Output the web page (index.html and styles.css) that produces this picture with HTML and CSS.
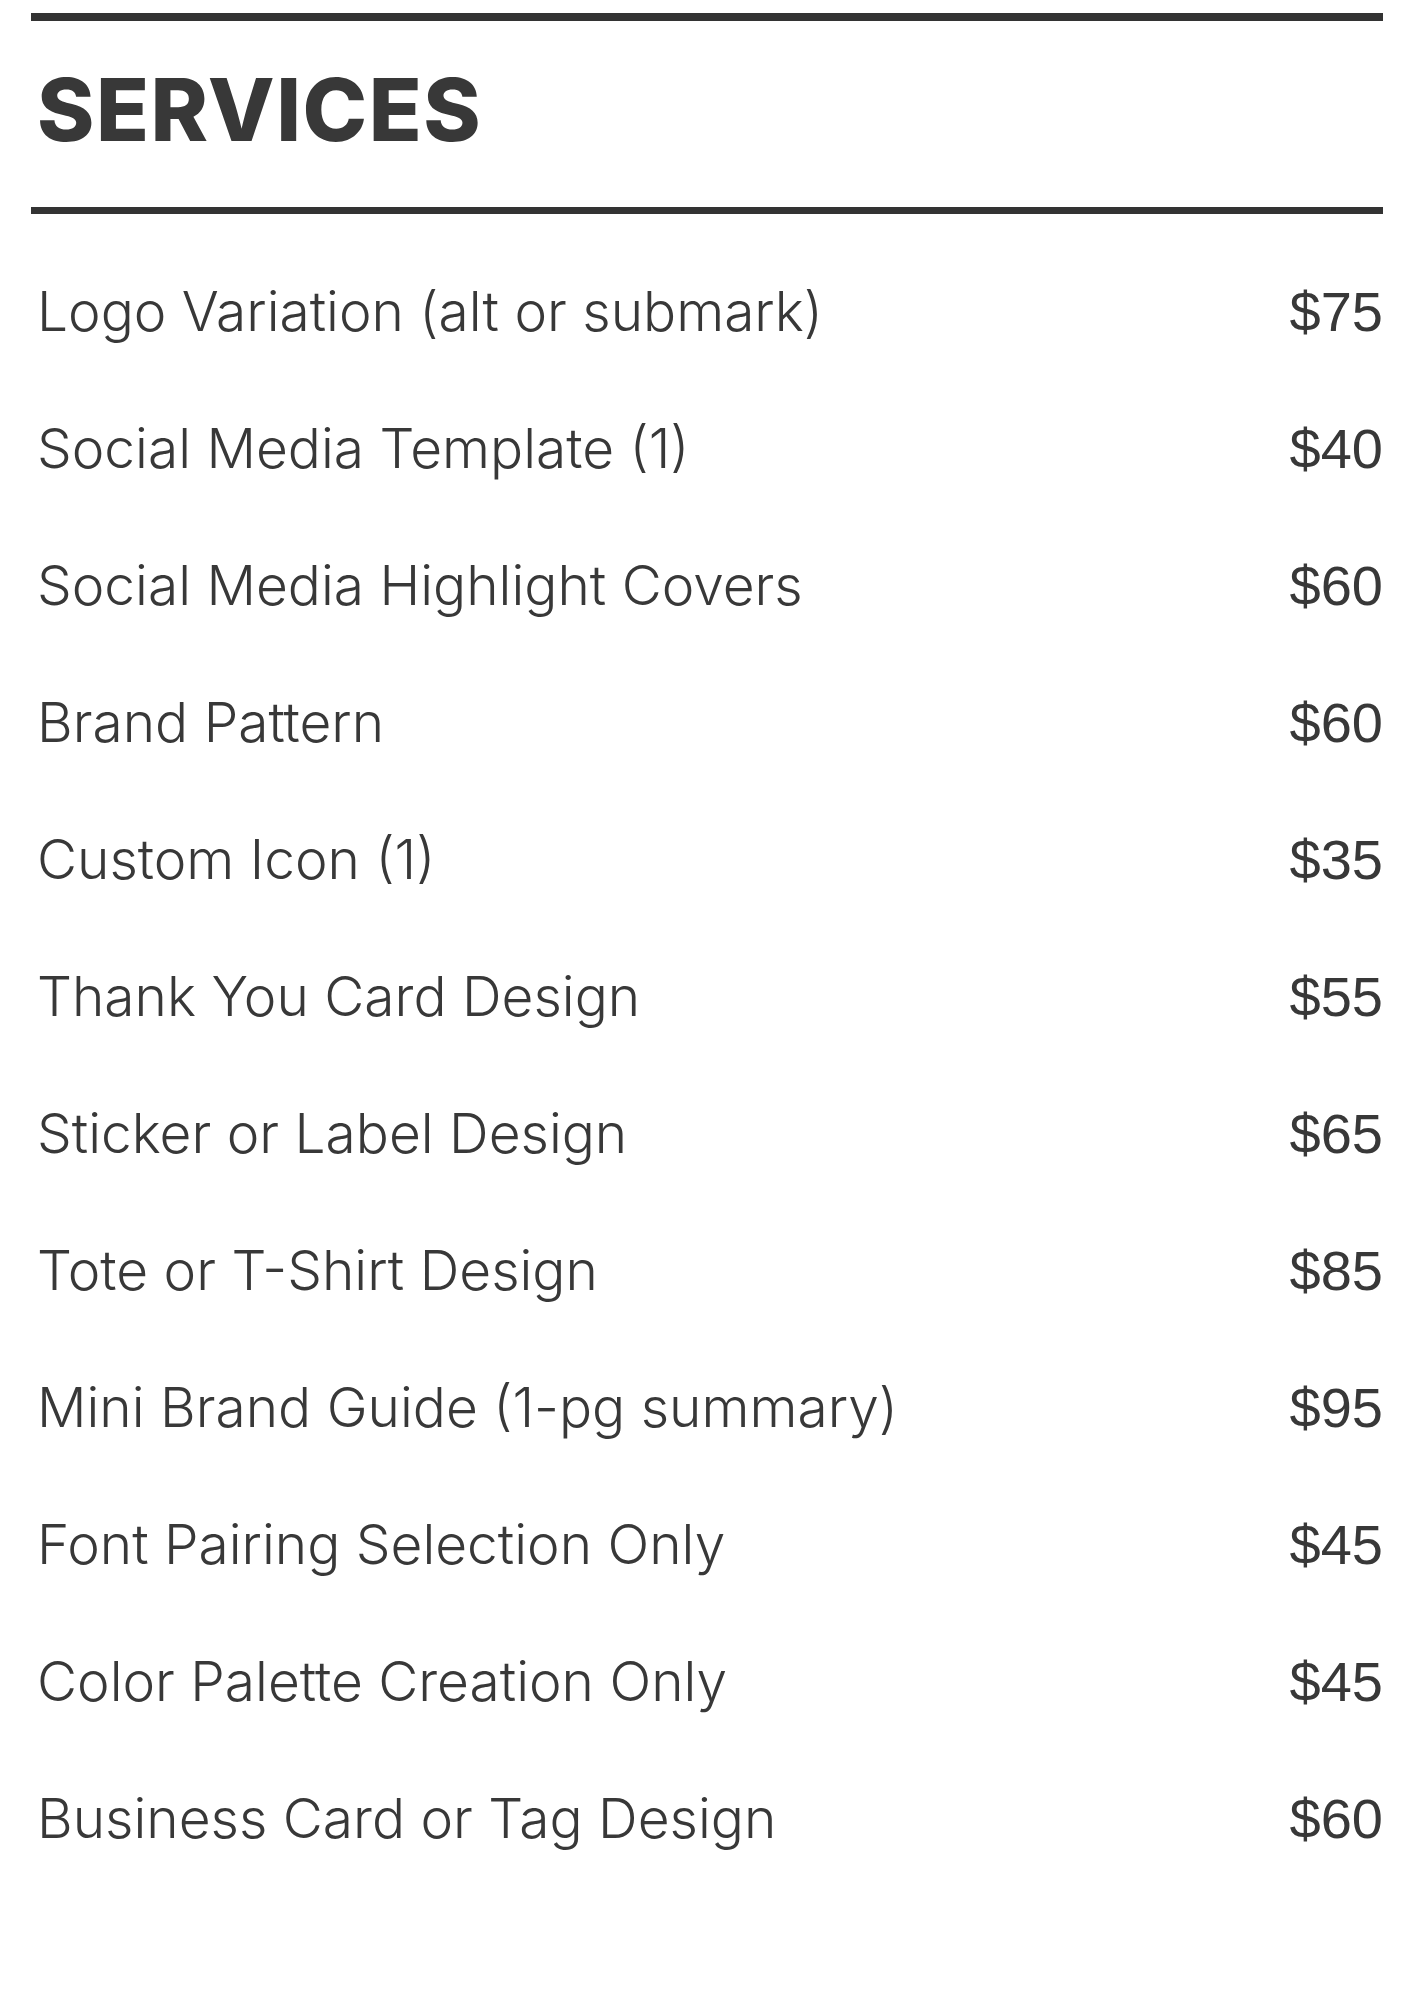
FILE: index.html
```html
<!DOCTYPE html>
<html lang="en">
<head>
<meta charset="utf-8">
<title>Services</title>
<link rel="stylesheet" href="styles.css">
</head>
<body>
<main class="sheet">
  <header class="head">
    <h1 class="title">SERVICES</h1>
  </header>
  <ul class="list">
    <li class="row"><span class="name">Logo Variation (alt or submark)</span><span class="price">$75</span></li>
    <li class="row"><span class="name">Social Media Template (1)</span><span class="price">$40</span></li>
    <li class="row"><span class="name">Social Media Highlight Covers</span><span class="price">$60</span></li>
    <li class="row"><span class="name">Brand Pattern</span><span class="price">$60</span></li>
    <li class="row"><span class="name">Custom Icon (1)</span><span class="price">$35</span></li>
    <li class="row"><span class="name">Thank You Card Design</span><span class="price">$55</span></li>
    <li class="row"><span class="name">Sticker or Label Design</span><span class="price">$65</span></li>
    <li class="row"><span class="name">Tote or T-Shirt Design</span><span class="price">$85</span></li>
    <li class="row"><span class="name">Mini Brand Guide (1-pg summary)</span><span class="price">$95</span></li>
    <li class="row"><span class="name">Font Pairing Selection Only</span><span class="price">$45</span></li>
    <li class="row"><span class="name">Color Palette Creation Only</span><span class="price">$45</span></li>
    <li class="row"><span class="name">Business Card or Tag Design</span><span class="price">$60</span></li>
  </ul>
</main>
</body>
</html>
```

FILE: styles.css
```css
html, body {
  margin: 0;
  padding: 0;
  background: #ffffff;
}

.sheet {
  width: 1352px;
  margin-left: 31px;
  padding-top: 13px;
  color: #383838;
}

.head {
  border-top: 8px solid #333333;
  border-bottom: 7px solid #333333;
  padding: 45px 0 54px 6px;
}

.title {
  margin: 0;
  font-family: "Inter", "Liberation Sans", sans-serif;
  font-weight: 800;
  font-size: 87px;
  line-height: 87px;
  letter-spacing: 1.5px;
  color: #383838;
}

.list {
  list-style: none;
  margin: 0;
  padding: 29px 0 0 6px;
}

.row {
  display: flex;
  justify-content: space-between;
  align-items: baseline;
  height: 137px;
  line-height: 137px;
}

.name {
  font-family: "Inter", "Liberation Sans", sans-serif;
  font-weight: 300;
  font-size: 55px;
  color: #383838;
}

.price {
  font-family: "Liberation Sans", Arial, sans-serif;
  font-weight: 400;
  font-size: 56px;
  color: #383838;
}
```
